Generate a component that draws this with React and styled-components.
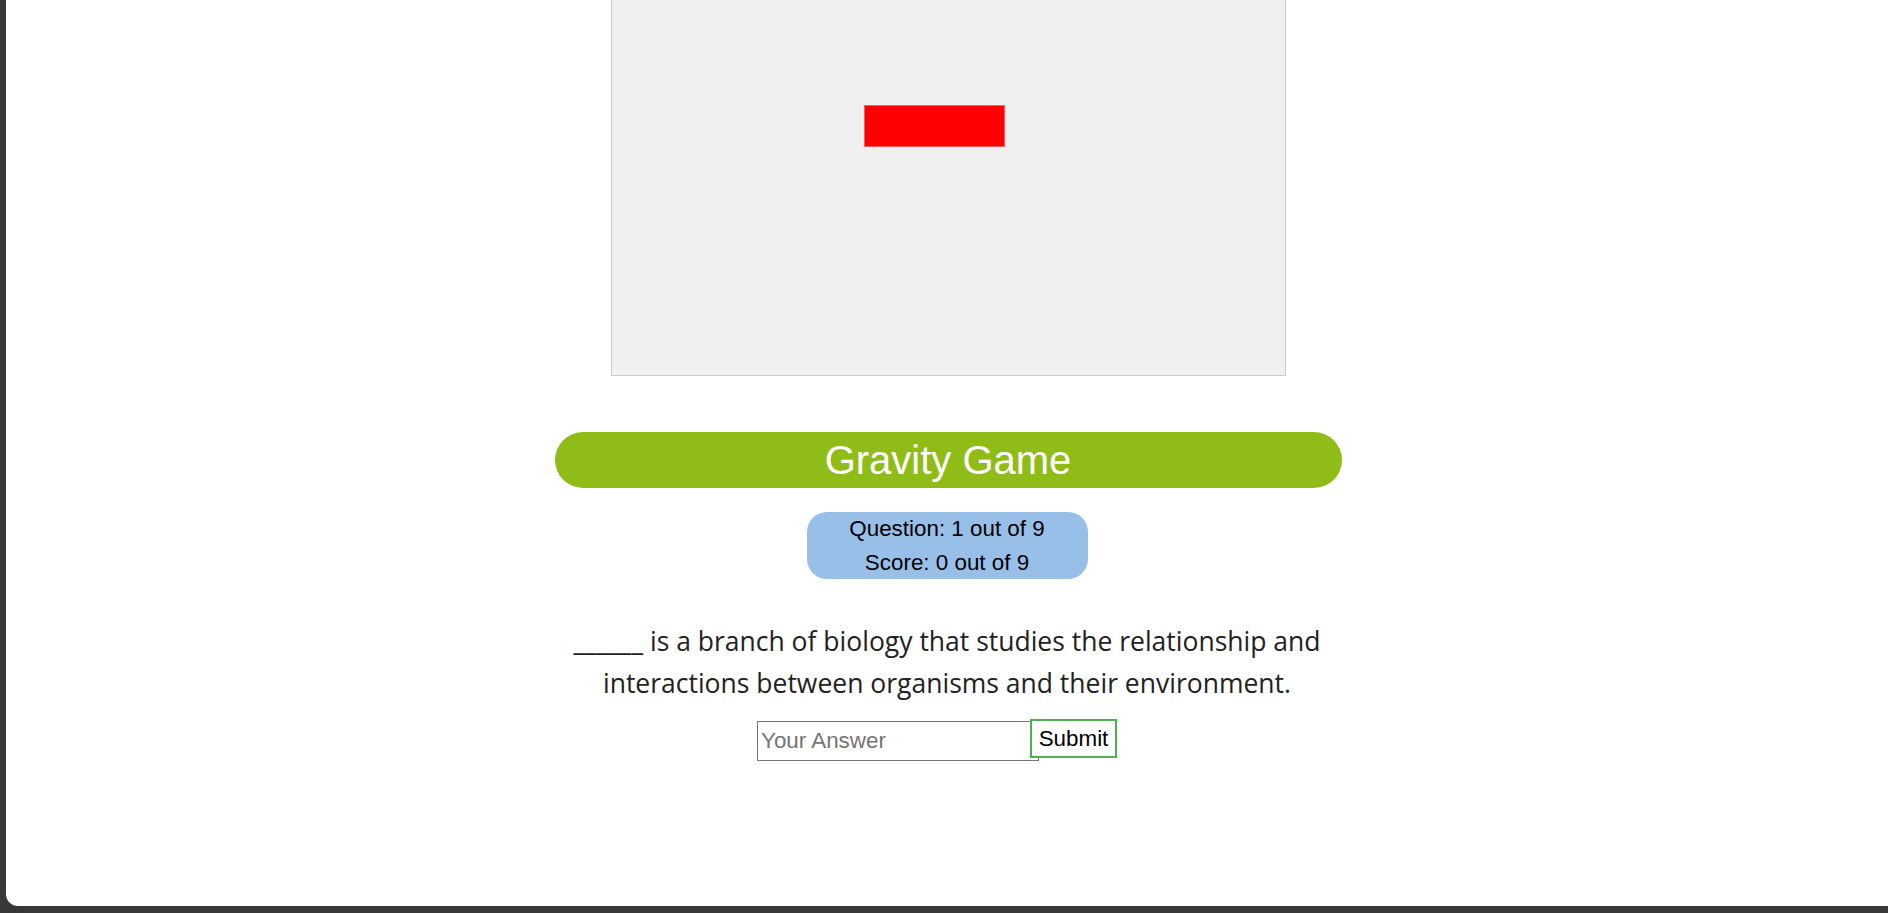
import React from "react";
import styled, { createGlobalStyle } from "styled-components";

const Global = createGlobalStyle`
  html, body { margin: 0; padding: 0; background: #383838; }
  body { font-family: "Liberation Sans", Arial, sans-serif; }
  * { box-sizing: border-box; }
`;

const Panel = styled.div`
  margin-left: 6px;
  height: 906px;
  background: #ffffff;
  border-bottom-left-radius: 12px;
  display: flex;
  flex-direction: column;
  align-items: center;
  overflow: hidden;
`;

const GameCanvas = styled.div`
  position: relative;
  width: 675px;
  height: 376px;
  flex: none;
  margin-left: 2px;
  background: #f0f0f0;
  border: 1px solid #cccccc;
  border-top: none;
`;

const Block = styled.div`
  position: absolute;
  background: #ff0000;
  border: 1px solid #ff5a5a;
`;

const TitleBar = styled.h1`
  margin: 56px 0 0 2px;
  width: 787px;
  height: 56px;
  border-radius: 28px;
  background: #8fbc16;
  color: #ffffff;
  font-family: "Liberation Sans", Arial, sans-serif;
  font-weight: 400;
  font-size: 40px;
  line-height: 56px;
  text-align: center;
`;

const Stats = styled.div`
  margin-top: 24px;
  width: 281px;
  height: 67px;
  border-radius: 20px;
  background: #97bfe8;
  color: #000;
  font-size: 22.4px;
  line-height: 33.5px;
  text-align: center;
`;

const Question = styled.p`
  margin: 41px 0 0;
  width: 787px;
  color: #222;
  font-family: "Open Sans", "Noto Sans", sans-serif;
  font-size: 26.5px;
  line-height: 42px;
  text-align: center;
`;

const AnswerRow = styled.form`
  margin-top: 15px;
  display: flex;
  align-items: flex-start;
  padding-right: 20px;
`;

const AnswerInput = styled.input`
  width: 282px;
  height: 40px;
  margin-top: 2px;
  border: 1px solid #767676;
  padding: 0 3px;
  font-family: "Liberation Sans", Arial, sans-serif;
  font-size: 22.4px;
  color: #000;
  background: #fff;
  outline: none;
  &::placeholder { color: #757575; }
`;

const SubmitButton = styled.button`
  position: relative;
  margin-left: -9px;
  width: 87px;
  height: 39px;
  border: 2px solid #4caf50;
  background: #fff;
  color: #000;
  font-family: "Liberation Sans", Arial, sans-serif;
  font-size: 22.4px;
  padding: 0 6px;
  cursor: pointer;
`;

export default function App() {
  return (
    <>
      <Global />
      <Panel>
        <GameCanvas>
          <Block style={{ left: 252, top: 105, width: 141, height: 42 }} />
        </GameCanvas>
        <TitleBar>Gravity Game</TitleBar>
        <Stats>
          <div>Question: 1 out of 9</div>
          <div>Score: 0 out of 9</div>
        </Stats>
        <Question>
          ______ is a branch of biology that studies the relationship and interactions between organisms and their environment.
        </Question>
        <AnswerRow onSubmit={(e) => e.preventDefault()}>
          <AnswerInput placeholder="Your Answer" />
          <SubmitButton type="submit">Submit</SubmitButton>
        </AnswerRow>
      </Panel>
    </>
  );
}
